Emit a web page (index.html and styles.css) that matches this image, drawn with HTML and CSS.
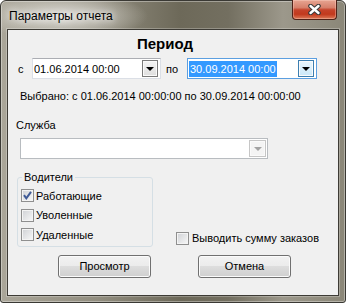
FILE: index.html
```html
<!DOCTYPE html>
<html lang="ru">

<head>
    <meta charset="UTF-8">
    <title>Параметры отчета</title>
    <link rel="stylesheet" href="styles.css">
</head>

<body>
    <div class="window">
        <div class="titlebar">
            <span class="title">Параметры отчета</span>
            <div class="close-btn">
                <svg width="13" height="11" viewBox="0 0 13 11">
                    <path d="M2.5 2 L10.5 9 M10.5 2 L2.5 9" stroke="#3b3b3b" stroke-width="4.6" stroke-linecap="round" fill="none" />
                    <path d="M2.5 2 L10.5 9 M10.5 2 L2.5 9" stroke="#ffffff" stroke-width="2.4" stroke-linecap="round" fill="none" />
                </svg>
            </div>
        </div>
        <div class="client">
            <h1 class="heading">Период</h1>
            <div class="period-row">
                <span class="lbl lbl-from">с</span>
                <div class="combo picker">
                    <span class="combo-text">01.06.2014 00:00</span>
                    <span class="combo-btn"><span class="arrow"></span></span>
                </div>
                <span class="lbl lbl-to">по</span>
                <div class="combo picker focused">
                    <span class="combo-text"><span class="selected">30.09.2014 00:00</span></span>
                    <span class="combo-btn"><span class="arrow"></span></span>
                </div>
            </div>
            <p class="chosen">Выбрано: с 01.06.2014 00:00:00 по 30.09.2014 00:00:00</p>
            <p class="field-label">Служба</p>
            <div class="combo service disabled">
                <span class="combo-text"></span>
                <span class="combo-btn"><span class="arrow"></span></span>
            </div>
            <div class="bottom-row">
                <fieldset class="group">
                    <legend>Водители</legend>
                    <div class="check-row">
                        <span class="check">
                            <svg width="11" height="11" viewBox="0 0 11 11">
                                <path d="M2 5.2 L4.3 8.4 L9 1.8" stroke="#3f5a96" stroke-width="2" fill="none" />
                            </svg>
                        </span>
                        Работающие
                    </div>
                    <div class="check-row"><span class="check"></span>Уволенные</div>
                    <div class="check-row"><span class="check"></span>Удаленные</div>
                </fieldset>
                <div class="check-row sum"><span class="check"></span>Выводить сумму заказов</div>
            </div>
            <div class="buttons">
                <button class="btn">Просмотр</button>
                <button class="btn">Отмена</button>
            </div>
        </div>
    </div>
</body>

</html>
```

FILE: styles.css
```css
body {
    margin: 0;
    padding: 0;
    background-color: #ffffff;
    font-family: "Liberation Sans", Arial, sans-serif;
    font-size: 11px;
    color: #000;
}

.window {
    width: 346px;
    height: 303px;
    box-sizing: border-box;
    display: flex;
    flex-direction: column;
    padding: 0 6px 6px;
    border: 1px solid #3a3934;
    border-radius: 6px 6px 3px 3px;
    box-shadow: inset 0 0 0 1px rgba(255, 255, 255, 0.35);
    background:
        radial-gradient(ellipse 85px 24px at 62px 15px, rgba(226, 224, 218, 0.95), rgba(226, 224, 218, 0)),
        linear-gradient(to right, #aaa699 0%, #928e80 28%, #6d6959 52%, #736f60 66%, #9c988b 82%, #8b8778 100%);
}

.titlebar {
    height: 28px;
    display: flex;
    align-items: flex-start;
}

.title {
    margin: 8px 0 0 2px;
    font-size: 12px;
    line-height: 14px;
    color: #000;
    text-shadow: 0 0 6px rgba(255, 255, 255, 0.9), 0 0 10px rgba(255, 255, 255, 0.7);
}

.close-btn {
    margin: -1px 2px 0 auto;
    width: 45px;
    height: 20px;
    box-sizing: border-box;
    display: flex;
    align-items: center;
    justify-content: center;
    border: 1px solid #4f2218;
    border-top: none;
    border-radius: 0 0 4px 4px;
    background: linear-gradient(#e7a592 0%, #d6806b 40%, #c5432a 52%, #c2391d 75%, #dc7a58 100%);
    box-shadow: inset 0 0 0 1px rgba(255, 220, 210, 0.35);
}

.client {
    flex: 1;
    background-color: #f0f0f0;
    border: 1px solid #3d3b35;
    box-shadow: 0 0 0 1px rgba(255, 255, 255, 0.25);
}

.heading {
    margin: 5px 0 0;
    padding-right: 16px;
    font-size: 15px;
    line-height: 18px;
    font-weight: bold;
    text-align: center;
}

.period-row {
    margin-top: 5px;
    height: 21px;
    display: flex;
    align-items: center;
}

.lbl {
    box-sizing: border-box;
    line-height: 14px;
}

.lbl-from {
    width: 24px;
    padding-left: 10px;
}

.lbl-to {
    width: 26px;
    padding-left: 5px;
}

.combo {
    height: 21px;
    box-sizing: border-box;
    display: flex;
    align-items: center;
    background-color: #fff;
    border: 1px solid #dbdfe6;
    border-top-color: #abadb3;
}

.picker {
    width: 129px;
}

.picker.focused {
    width: 130px;
    border-color: #5c9fe0;
}

.combo-text {
    flex: 1;
    padding-left: 1px;
    line-height: 16px;
    white-space: nowrap;
}

.selected {
    display: inline-block;
    padding: 0 1px;
    background-color: #3399ff;
    color: #fff;
}

.combo-btn {
    width: 16px;
    height: 17px;
    box-sizing: border-box;
    margin-right: 2px;
    display: flex;
    align-items: center;
    justify-content: center;
    border: 1px solid #7a7a7a;
    background: linear-gradient(#f4f4f4, #dedede);
    box-shadow: inset 0 0 0 1px #fafafa;
}

.focused .combo-btn {
    border-color: #3c7fb1;
    background: linear-gradient(#eaf6fd, #c9e7f8);
}

.arrow {
    width: 0;
    height: 0;
    border-top: 4px solid #000;
    border-left: 4px solid transparent;
    border-right: 4px solid transparent;
}

.chosen {
    margin: 10px 0 0 12px;
    line-height: 14px;
}

.field-label {
    margin: 15px 0 0 8px;
    line-height: 14px;
}

.service {
    width: 248px;
    margin: 6px 0 0 12px;
    border-color: #b8bcc0;
}

.service .combo-btn {
    width: 17px;
    margin-right: 1px;
    border-color: #c6c6c6;
    background: #f4f4f4;
}

.service .arrow {
    border-top-color: #a2a2a2;
}

.bottom-row {
    margin-top: 11px;
    display: flex;
    align-items: flex-end;
}

.group {
    width: 136px;
    box-sizing: border-box;
    margin: 0 0 0 9px;
    padding: 2px 0 1px 3px;
    border: 1px solid #d5dfe5;
    border-radius: 3px;
}

.group legend {
    margin-left: 1px;
    padding: 0 2px;
    line-height: 14px;
}

.check-row {
    height: 19.5px;
    display: flex;
    align-items: center;
    gap: 2px;
    line-height: 14px;
    white-space: nowrap;
}

.check {
    width: 13px;
    height: 13px;
    box-sizing: border-box;
    display: flex;
    align-items: center;
    justify-content: center;
    border: 1px solid #8f8f8f;
    background: linear-gradient(135deg, #cfd1d5, #f8f8f8);
    box-shadow: inset 0 0 0 1px #f4f4f4;
}

.sum {
    height: 15px;
    margin: 0 0 1px 23px;
    gap: 3px;
}

.buttons {
    margin-top: 8px;
    padding-left: 50px;
    display: flex;
    gap: 47px;
}

.btn {
    width: 93px;
    height: 23px;
    padding: 0;
    font-family: "Liberation Sans", Arial, sans-serif;
    font-size: 11px;
    color: #000;
    border: 1px solid #707070;
    border-radius: 3px;
    background: linear-gradient(#f2f2f2 0%, #ebebeb 50%, #dddddd 50%, #cfcfcf 100%);
    box-shadow: inset 0 0 0 1px #fbfbfb;
}
```
